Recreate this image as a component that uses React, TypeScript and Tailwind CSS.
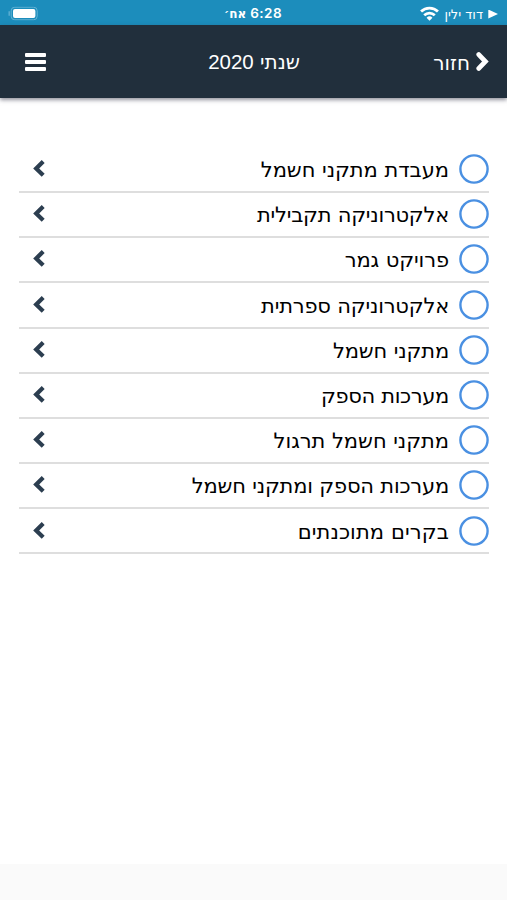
const courses = [
  { title: "מעבדת מתקני חשמל", spacing: "tracking-[-0.05px]" },
  { title: "אלקטרוניקה תקבילית", spacing: "tracking-[-0.25px]" },
  { title: "פרויקט גמר", spacing: "tracking-[-0.1px]" },
  { title: "אלקטרוניקה ספרתית", spacing: "tracking-[-0.2px]" },
  { title: "מתקני חשמל", spacing: "tracking-[-0.15px]" },
  { title: "מערכות הספק", spacing: "tracking-[-0.35px]" },
  { title: "מתקני חשמל תרגול", spacing: "tracking-[-0.05px]" },
  { title: "מערכות הספק ומתקני חשמל", spacing: "tracking-[-0.2px]" },
  { title: "בקרים מתוכנתים", spacing: "tracking-[0.1px]" },
];

function StatusBar() {
  return (
    <div className="grid h-[25px] grid-cols-3 items-center bg-[#1c8dbc] pt-[3px] pr-[9px] pl-2 text-white">
      <div className="flex items-center gap-[5px]">
        <svg className="h-[9px] w-[10px]" viewBox="0 0 10 9" fill="currentColor">
          <path d="M0.3 0 10 4.5 0.3 9Z" transform="translate(0 -0.5)" />
        </svg>
        <span className="font-['DejaVu_Sans',sans-serif] text-[13px] leading-none">דוד ילין</span>
        <svg className="h-[15px] w-[19px] -translate-y-px" viewBox="0 0 18 14" fill="none" stroke="currentColor" strokeWidth="2.6">
          <path d="M1 5.2a11.4 11.4 0 0 1 16 0" />
          <path d="M4 8.7a7.2 7.2 0 0 1 10 0" />
          <path d="M9 13.8 6.2 11a4 4 0 0 1 5.6 0Z" fill="currentColor" stroke="none" />
        </svg>
      </div>
      <div className="text-center font-['Inter',sans-serif] text-[13.5px] leading-none font-semibold tracking-[0.45px]">
        6:28 <span className="font-['DejaVu_Sans',sans-serif] text-[12px] font-bold tracking-normal">אח׳</span>
      </div>
      <div className="flex -translate-y-[0.5px] justify-end">
        <svg className="h-[14px] w-[30px]" viewBox="0 0 30 14">
          <path d="M1.2 4.8v4.4" stroke="#5fb0d3" strokeWidth="1.4" />
          <rect x="3.2" y="0.7" width="26" height="12.6" rx="3.6" fill="none" stroke="#65b3d4" />
          <rect x="5" y="2.4" width="22.4" height="9.2" rx="2" fill="#fff" />
        </svg>
      </div>
    </div>
  );
}

function Header() {
  return (
    <header className="relative grid h-[73px] grid-cols-3 items-center bg-[#212f3c] pr-[18px] pl-[25px] text-white shadow-[0_2px_4px_rgba(40,40,60,0.5)]">
      <button className="flex items-center gap-[6px] text-[20px] leading-none">
        <svg className="h-[19px] w-[13px]" viewBox="0 0 13 19" fill="none" stroke="currentColor" strokeWidth="4.8">
          <path d="M2.8 2.6 9.4 9.5 2.8 16.4" strokeLinecap="round" />
        </svg>
        <span className="pt-[2px] font-['DejaVu_Sans',sans-serif]">חזור</span>
      </button>
      <h1 className="-translate-x-[3px] pt-px text-center font-['DejaVu_Sans',sans-serif] text-[20px] leading-none">
        שנתי <span className="font-['Liberation_Sans',sans-serif] text-[20.5px]">2020</span>
      </h1>
      <button className="flex flex-col items-start gap-[3px] justify-self-end">
        <span className="h-[4px] w-[21px] rounded-[1px] bg-white" />
        <span className="h-[4px] w-[21px] rounded-[1px] bg-white" />
        <span className="h-[4px] w-[21px] rounded-[1px] bg-white" />
      </button>
    </header>
  );
}

export default function App() {
  return (
    <div dir="rtl" className="flex h-[900px] w-[507px] flex-col bg-white font-['Liberation_Sans',sans-serif] text-black">
      <StatusBar />
      <Header />
      <main className="flex-1 px-[18px] pt-[49.8px]">
        <ul className="pl-px">
          {courses.map((course) => (
            <li key={course.title} className="flex h-[45.2px] items-center border-b-2 border-[#dedede] pb-[0.6px]">
              <svg className="size-[30px] shrink-0" viewBox="0 0 30 30" fill="none">
                <circle cx="15" cy="15" r="13.6" stroke="#4a90e2" strokeWidth="2.4" />
              </svg>
              <span
                className={`mr-[10px] flex-1 pt-[3px] font-['DejaVu_Sans',sans-serif] text-[21px] leading-none ${course.spacing}`}
              >
                {course.title}
              </span>
              <svg className="ml-[14px] h-[20px] w-[13px]" viewBox="0 0 13 20" fill="none" stroke="#2c3e50" strokeWidth="4.2">
                <path d="M10.2 2.6 3.2 9.4l7 6.8" />
              </svg>
            </li>
          ))}
        </ul>
      </main>
      <footer className="h-9 bg-[#fafafa]" />
    </div>
  );
}
